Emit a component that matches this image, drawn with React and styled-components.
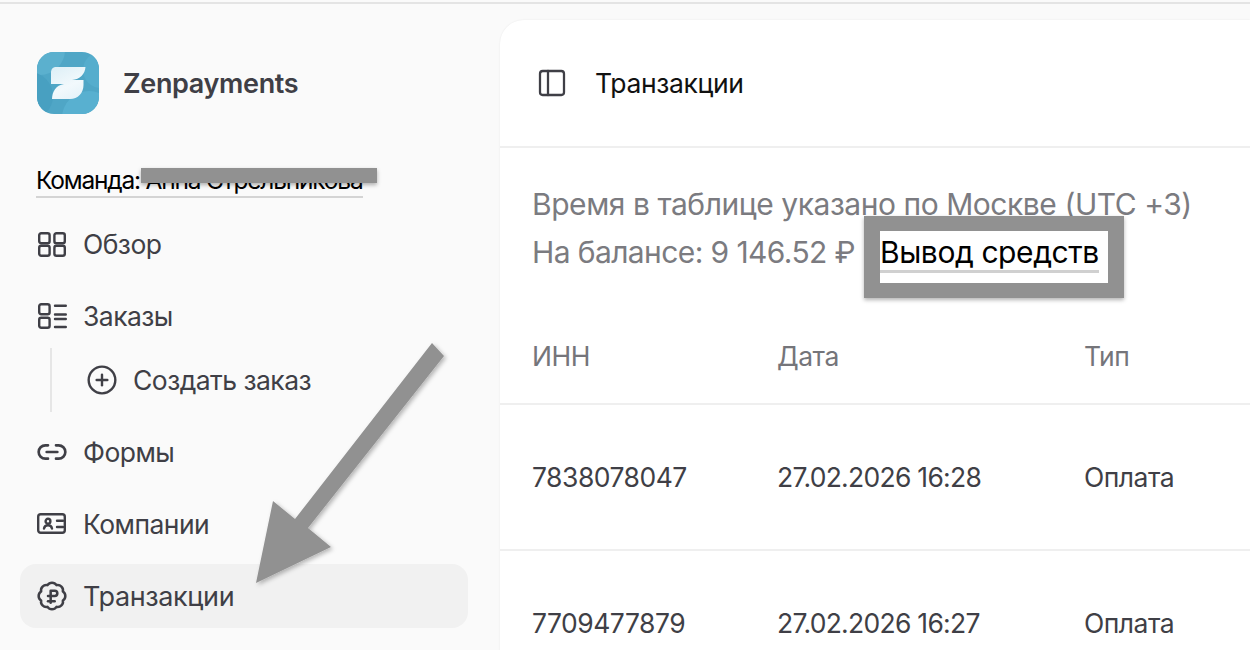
import React from "react";
import styled, { createGlobalStyle } from "styled-components";
import { BadgeRussianRuble, CirclePlus, Link2, PanelLeft } from "lucide-react";

const Global = createGlobalStyle`
  html, body { margin: 0; padding: 0; background: #fafafa; }
  body { font-family: Inter, "Liberation Sans", sans-serif; overflow: hidden; }
  * { box-sizing: border-box; }
`;
const Page = styled.div`
  position: relative; width: 1250px; height: 650px; overflow: hidden;
  display: grid; grid-template-columns: 500px 1fr; padding-top: 20px; background: #fafafa;
  &::before { content: ""; position: absolute; inset: 2px 0 auto; height: 2px; background: #e4e4e4; }
`;
const Sidebar = styled.aside`display: flex; flex-direction: column; padding: 32px 32px 0 20px; color: #3f3f46;`;
const Brand = styled.div`display: flex; align-items: center; gap: 24px; margin-left: 17px; height: 62px;`;
const BrandName = styled.span`font-size: 27px; font-weight: 600; letter-spacing: -0.35px;`;
const Team = styled.div`
  margin: 51px 0 14px 16px; width: 327px; height: 33px; color: #000; font-size: 24.5px; line-height: 30px;
  letter-spacing: -1.2px; border-bottom: 2px solid #d4d4d4; white-space: nowrap;
`;
const Nav = styled.nav`display: flex; flex-direction: column; gap: 8px;`;
const Item = styled.div`
  height: 64px; display: flex; align-items: center; gap: 15px; padding-left: 16px; border-radius: 16px;
  font-size: ${p => p.$active ? "27px" : "26.5px"}; letter-spacing: ${p => p.$active ? "-0.38px" : "-0.55px"};
  color: #3f3f46; background: ${p => p.$active ? "#f1f1f1" : "transparent"};
  svg { flex: none; width: 32px; height: 32px; }
`;
const SubList = styled.div`margin: -8px 0 0 30px; border-left: 2px solid #e6e6e6; height: 64px; padding-left: 34px;`;
const SubItem = styled(Item)`padding-left: 0;`;
const Main = styled.main`
  background: #fff; border-radius: 24px 0 0 0; display: flex; flex-direction: column;
  box-shadow: 0 0 2px rgba(0,0,0,.08);
`;
const Header = styled.header`
  height: 128px; flex: none; display: flex; align-items: center; gap: 27px; padding: 0 0 1px 36px;
  border-bottom: 2px solid #efefef; font-size: 26.5px; letter-spacing: -0.35px; color: #111;
  svg { width: 32px; height: 32px; color: #3f3f46; }
`;
const Info = styled.div`padding: 32px 0 0 32px; color: #7b7b80; font-size: 30px; line-height: 48px; letter-spacing: -0.45px; white-space: nowrap;`;
const Balance = styled.div`display: flex; gap: 25px; letter-spacing: -0.6px;`;
const Withdraw = styled.span`
  color: #000; display: inline-block; height: 42px; line-height: 42px; border-bottom: 3px solid #d0d0d0; margin-top: 3px;
  letter-spacing: -0.42px;
`;
const Row = styled.div`
  display: grid; grid-template-columns: 245px 307px 1fr; align-items: center; padding-left: 32px; flex: none;
  height: ${p => p.$head ? "96px" : "146px"}; margin-top: ${p => p.$head ? "33px" : "0"};
  font-size: 26.5px; letter-spacing: -0.5px;
  color: ${p => p.$head ? "#75757a" : "#3f3f46"}; border-bottom: 2px solid #efefef;
`;
const DateCell = styled.span`letter-spacing: -0.72px;`;
const Overlay = styled.svg`position: absolute; left: 0; top: 0; width: 1250px; height: 650px; pointer-events: none;`;
const Redact = styled.div`
  position: absolute; left: 141px; top: 168px; width: 236px; height: 15px; background: #919191;
  box-shadow: 0 2px 4px rgba(0,0,0,.3);
`;
const Frame = styled.div`
  position: absolute; left: 864px; top: 216px; width: 260px; height: 82px; border: 15px solid #919191;
  border-width: 15px 16px; box-shadow: 0 2px 4px rgba(0,0,0,.3);
`;

const Stroke = ({ children }) => (
  <svg viewBox="0 0 32 32" fill="none" stroke="currentColor" strokeWidth="2.4" strokeLinecap="round" strokeLinejoin="round">{children}</svg>
);
const GridIcon = () => (
  <Stroke>
    <rect x="3.2" y="5.2" width="10.4" height="10" rx="2" />
    <rect x="18.4" y="5.2" width="10.4" height="10" rx="2" />
    <rect x="3.2" y="17.8" width="10.4" height="10" rx="2" />
    <rect x="18.4" y="17.8" width="10.4" height="10" rx="2" />
  </Stroke>
);
const ListIcon = () => (
  <Stroke>
    <rect x="3.2" y="4.2" width="10.4" height="10" rx="2" />
    <rect x="3.2" y="17.8" width="10.4" height="10" rx="2" />
    <path d="M19 5.7h10.8M19 14.5h10.8M19 19h10.8M19 27h10.8" />
  </Stroke>
);
const CardIcon = () => (
  <Stroke>
    <rect x="2.2" y="6.2" width="26.6" height="18.6" rx="2.5" />
    <circle cx="12" cy="13.2" r="2.4" />
    <path d="M8 20.5c.5-2.2 2-3.2 4-3.2s3.5 1 4 3.2M21 12.7h6M21 19h6" />
  </Stroke>
);
const Logo = () => (
  <svg width="62" height="62" viewBox="0 0 62 62" aria-hidden="true">
    <defs>
      <linearGradient id="s" x1="0.2" y1="0" x2="0.7" y2="1">
        <stop offset="0" stopColor="#dff0f7" /><stop offset="0.6" stopColor="#f2f9fc" /><stop offset="1" stopColor="#e6f3f9" />
      </linearGradient>
      <clipPath id="c"><rect width="62" height="62" rx="17" /></clipPath>
    </defs>
    <g clipPath="url(#c)">
      <rect width="62" height="62" fill="#4fa6c6" />
      <circle cx="3" cy="-2" r="25" fill="#5bb0ce" />
      <circle cx="-8" cy="44" r="24" fill="#48a0c1" />
      <circle cx="52" cy="66" r="27" fill="#58b0d0" />
      <circle cx="64" cy="18" r="18" fill="#55adcd" />
    </g>
    <path d="M19 15H48.5C48 22 43 27.5 35 28H46.5V33C46.5 41 41 47 33 47H15C15 40 19 33 27 32H14V21C14 17 16 15 19 15Z" fill="url(#s)" />
  </svg>
);

const rows = [["7838078047", "27.02.2026 16:28", "Оплата"], ["7709477879", "27.02.2026 16:27", "Оплата"]];

export default function App() {
  return (
    <Page>
      <Global />
      <Sidebar>
        <Brand><Logo /><BrandName>Zenpayments</BrandName></Brand>
        <Team>Команда: Анна Стрельникова</Team>
        <Nav>
          <Item><GridIcon />Обзор</Item>
          <Item><ListIcon />Заказы</Item>
          <SubList><SubItem><CirclePlus strokeWidth={1.8} />Создать заказ</SubItem></SubList>
          <Item><Link2 strokeWidth={2} />Формы</Item>
          <Item><CardIcon />Компании</Item>
          <Item $active><BadgeRussianRuble strokeWidth={1.9} />Транзакции</Item>
        </Nav>
      </Sidebar>
      <Main>
        <Header><PanelLeft strokeWidth={1.7} />Транзакции</Header>
        <Info>
          <div>Время в таблице указано по Москве (UTC +3)</div>
          <Balance><span>На балансе: 9 146.52 ₽</span><Withdraw>Вывод средств</Withdraw></Balance>
        </Info>
        <Row $head><span>ИНН</span><span>Дата</span><span>Тип</span></Row>
        {rows.map(r => <Row key={r[0]}><span>{r[0]}</span><DateCell>{r[1]}</DateCell><span>{r[2]}</span></Row>)}
      </Main>
      <Redact />
      <Frame />
      <Overlay viewBox="0 0 1250 650" aria-hidden="true">
        <defs><filter id="sh" x="-20%" y="-20%" width="140%" height="140%"><feDropShadow dx="2" dy="2" stdDeviation="2" floodColor="#000" floodOpacity=".28" /></filter></defs>
        <polygon points="432,343 444,356 308,528 331,547 256,583 273,501 295,519" fill="#919191" filter="url(#sh)" />
      </Overlay>
    </Page>
  );
}
